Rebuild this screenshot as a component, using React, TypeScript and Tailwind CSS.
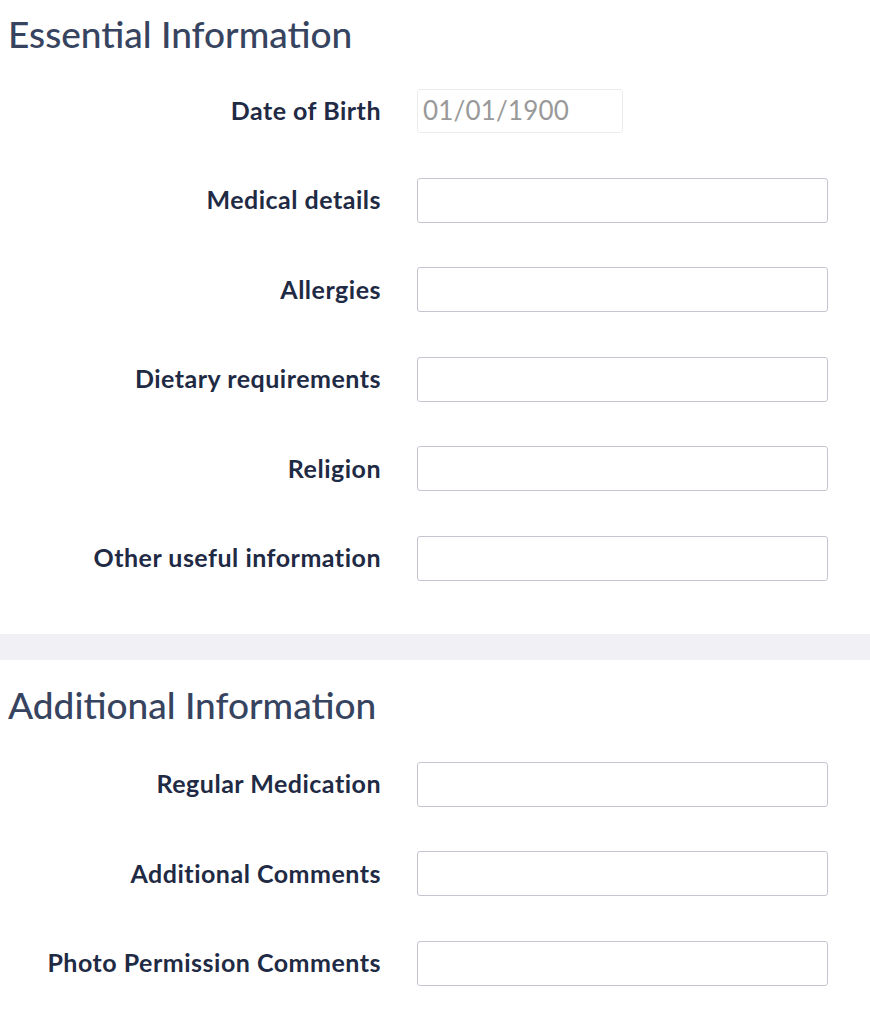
const essential = [
  "Medical details",
  "Allergies",
  "Dietary requirements",
  "Religion",
  "Other useful information",
];

const additional = [
  "Regular Medication",
  "Additional Comments",
  "Photo Permission Comments",
];

function Field({ label, children }: { label: string; children: React.ReactNode }) {
  return (
    <div className="flex h-[45px] items-center">
      <label className="w-[381px] shrink-0 text-right text-[25px] font-bold tracking-[0.5px] text-[#1f2a44]">
        {label}
      </label>
      <div className="ml-[36px]">{children}</div>
    </div>
  );
}

function TextInput() {
  return (
    <input
      type="text"
      className="block h-[45px] w-[411px] rounded-[3px] border border-[#c3c6d1] bg-white px-2 text-[23px] outline-none"
    />
  );
}

export default function App() {
  return (
    <div className="min-h-screen bg-white font-['Lato',sans-serif]">
      {/* Essential */}
      <section className="pt-[12px] pb-[53px]">
        <h2 className="h-[44px] pl-[8px] text-[37px] leading-[44px] font-medium text-[#37445f]">
          Essential Information
        </h2>
        <div className="mt-[32px] flex flex-col gap-[44.5px]">
          <Field label="Date of Birth">
            <div className="flex h-[44px] w-[206px] items-center rounded-[3px] border border-[#ececec] bg-white px-[5px] text-[26px] tracking-[0.2px] text-[#999999]">
              01/01/1900
            </div>
          </Field>
          {essential.map((l) => (
            <Field key={l} label={l}>
              <TextInput />
            </Field>
          ))}
        </div>
      </section>

      <div className="h-[26px] bg-[#f1f1f5]" />

      {/* Additional */}
      <section className="pt-[23px] pb-[40px]">
        <h2 className="h-[44px] pl-[8px] text-[37px] leading-[44px] font-medium text-[#37445f]">
          Additional Information
        </h2>
        <div className="mt-[35px] flex flex-col gap-[44.5px]">
          {additional.map((l) => (
            <Field key={l} label={l}>
              <TextInput />
            </Field>
          ))}
        </div>
      </section>
    </div>
  );
}
